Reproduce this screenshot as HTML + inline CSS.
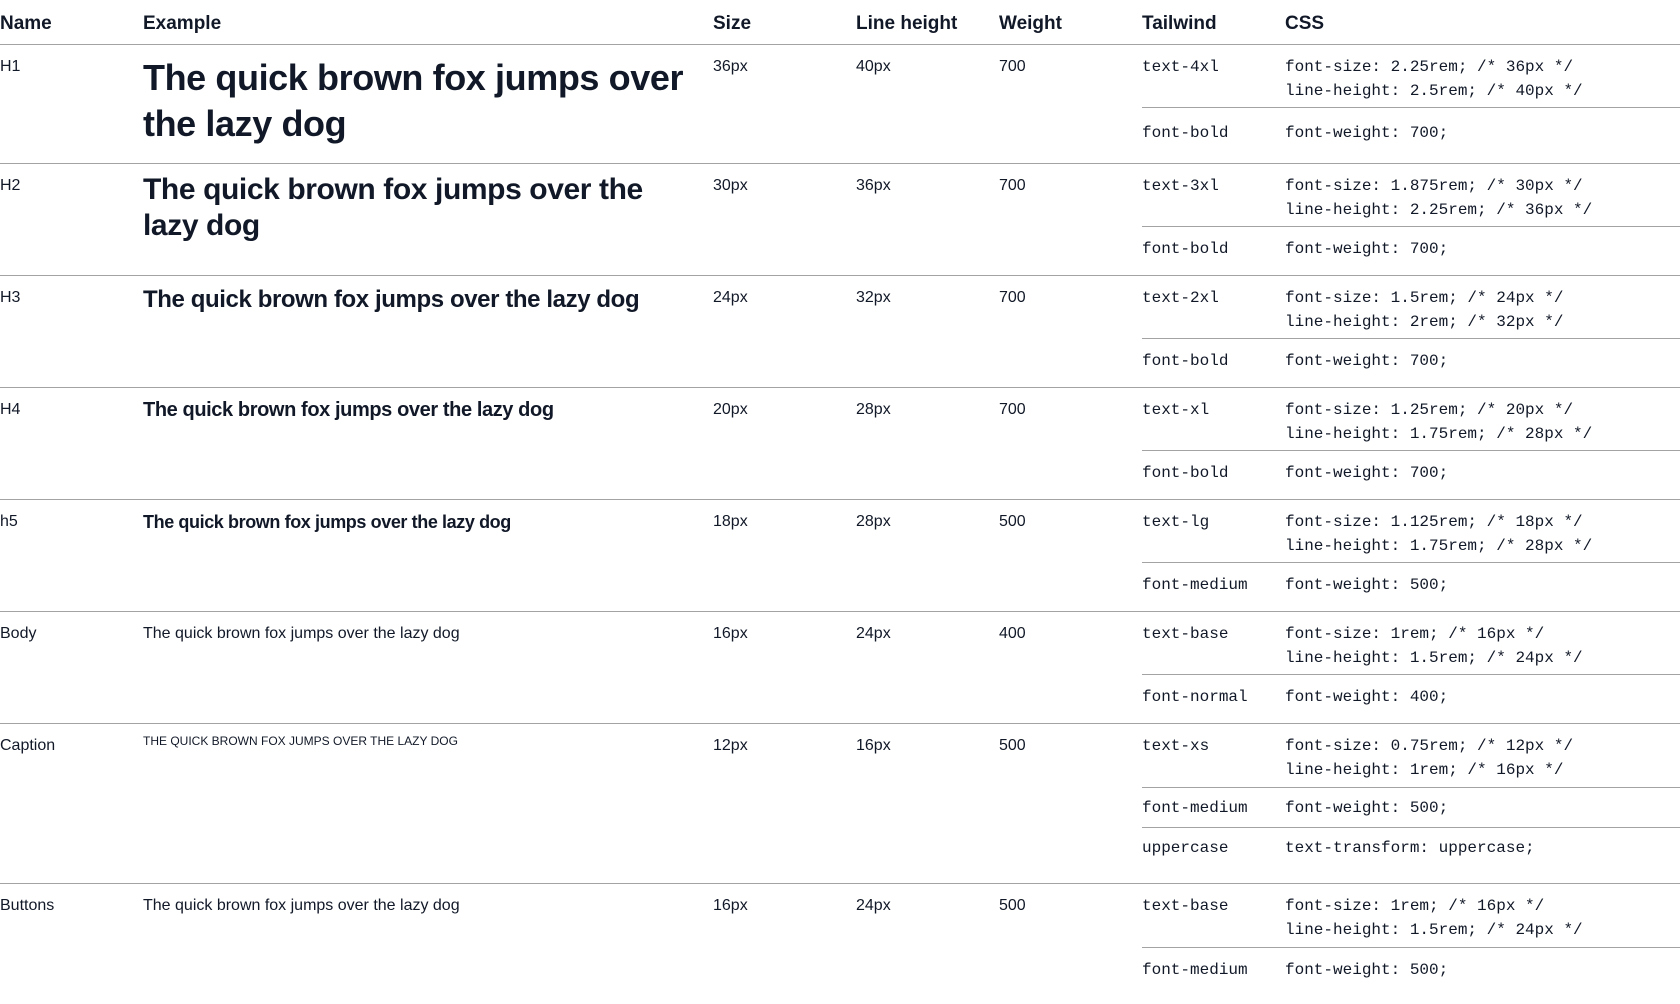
<!DOCTYPE html>
<html><head><meta charset="utf-8"><style>
*{margin:0;padding:0;box-sizing:border-box}
body{width:1680px;height:979px;overflow:hidden;background:#fff;color:#111827;font-family:"Liberation Sans",sans-serif;font-size:16px;line-height:24px}
.row{position:relative;border-bottom:1px solid #a3a3a3}
.c{position:absolute;top:0;padding-top:10px}
.n{left:0}.e{left:143px;width:560px}.s{left:713px}.l{left:856px}.w{left:999px}
.e.h{letter-spacing:-0.4px}
.tw{position:absolute;left:1142px;right:0;top:0}
.sub{position:relative;border-bottom:1px solid #a3a3a3;font-family:"Liberation Mono",monospace;font-size:16px;line-height:24px;padding-top:10px}
.sub:last-child{border-bottom:none}
.sub .a{position:absolute;left:0;top:10px}
.sub .b{margin-left:143px}
.hd{height:45px;border-bottom:1px solid #a3a3a3;position:relative}
.hd div{position:absolute;top:12px;font-weight:bold;font-size:19px;line-height:24px}
</style></head><body>
<div class="hd"><div style="left:0">Name</div><div style="left:143px">Example</div><div style="left:713px">Size</div><div style="left:856px">Line height</div><div style="left:999px">Weight</div><div style="left:1142px">Tailwind</div><div style="left:1285px">CSS</div></div>

<div class="row" style="height:119px">
<div class="c n">H1</div><div class="c e h" style="font-size:36px;line-height:46px;font-weight:bold;padding-top:10px">The quick brown fox jumps over the lazy dog</div>
<div class="c s">36px</div><div class="c l">40px</div><div class="c w">700</div>
<div class="tw"><div class="sub" style="height:63px"><span class="a">text-4xl</span><div class="b">font-size: 2.25rem; /* 36px */<br>line-height: 2.5rem; /* 40px */</div></div><div class="sub" style="height:56px;padding-top:13px"><span class="a" style="top:13px">font-bold</span><div class="b">font-weight: 700;</div></div></div>
</div>

<div class="row" style="height:112px">
<div class="c n">H2</div><div class="c e h" style="font-size:30px;line-height:36px;font-weight:bold;padding-top:8px;width:540px">The quick brown fox jumps over the lazy dog</div>
<div class="c s">30px</div><div class="c l">36px</div><div class="c w">700</div>
<div class="tw"><div class="sub" style="height:63px"><span class="a">text-3xl</span><div class="b">font-size: 1.875rem; /* 30px */<br>line-height: 2.25rem; /* 36px */</div></div><div class="sub" style="height:49px"><span class="a">font-bold</span><div class="b">font-weight: 700;</div></div></div>
</div>

<div class="row" style="height:112px">
<div class="c n">H3</div><div class="c e h" style="font-size:24px;line-height:32px;font-weight:bold;padding-top:8px">The quick brown fox jumps over the lazy dog</div>
<div class="c s">24px</div><div class="c l">32px</div><div class="c w">700</div>
<div class="tw"><div class="sub" style="height:63px"><span class="a">text-2xl</span><div class="b">font-size: 1.5rem; /* 24px */<br>line-height: 2rem; /* 32px */</div></div><div class="sub" style="height:49px"><span class="a">font-bold</span><div class="b">font-weight: 700;</div></div></div>
</div>

<div class="row" style="height:112px">
<div class="c n">H4</div><div class="c e h" style="font-size:20px;line-height:28px;font-weight:bold;padding-top:8px">The quick brown fox jumps over the lazy dog</div>
<div class="c s">20px</div><div class="c l">28px</div><div class="c w">700</div>
<div class="tw"><div class="sub" style="height:63px"><span class="a">text-xl</span><div class="b">font-size: 1.25rem; /* 20px */<br>line-height: 1.75rem; /* 28px */</div></div><div class="sub" style="height:49px"><span class="a">font-bold</span><div class="b">font-weight: 700;</div></div></div>
</div>

<div class="row" style="height:112px">
<div class="c n">h5</div><div class="c e h" style="font-size:18px;line-height:28px;font-weight:bold;padding-top:8px">The quick brown fox jumps over the lazy dog</div>
<div class="c s">18px</div><div class="c l">28px</div><div class="c w">500</div>
<div class="tw"><div class="sub" style="height:63px"><span class="a">text-lg</span><div class="b">font-size: 1.125rem; /* 18px */<br>line-height: 1.75rem; /* 28px */</div></div><div class="sub" style="height:49px"><span class="a">font-medium</span><div class="b">font-weight: 500;</div></div></div>
</div>

<div class="row" style="height:112px">
<div class="c n">Body</div><div class="c e">The quick brown fox jumps over the lazy dog</div>
<div class="c s">16px</div><div class="c l">24px</div><div class="c w">400</div>
<div class="tw"><div class="sub" style="height:63px"><span class="a">text-base</span><div class="b">font-size: 1rem; /* 16px */<br>line-height: 1.5rem; /* 24px */</div></div><div class="sub" style="height:49px"><span class="a">font-normal</span><div class="b">font-weight: 400;</div></div></div>
</div>

<div class="row" style="height:160px">
<div class="c n">Caption</div><div class="c e" style="font-size:12px;line-height:16px;text-transform:uppercase;padding-top:9px">The quick brown fox jumps over the lazy dog</div>
<div class="c s">12px</div><div class="c l">16px</div><div class="c w">500</div>
<div class="tw"><div class="sub" style="height:64px"><span class="a">text-xs</span><div class="b">font-size: 0.75rem; /* 12px */<br>line-height: 1rem; /* 16px */</div></div><div class="sub" style="height:40px;padding-top:8px"><span class="a" style="top:8px">font-medium</span><div class="b">font-weight: 500;</div></div><div class="sub" style="height:56px;padding-top:8px"><span class="a" style="top:8px">uppercase</span><div class="b">text-transform: uppercase;</div></div></div>
</div>

<div class="row" style="height:120px;border-bottom:none">
<div class="c n">Buttons</div><div class="c e">The quick brown fox jumps over the lazy dog</div>
<div class="c s">16px</div><div class="c l">24px</div><div class="c w">500</div>
<div class="tw"><div class="sub" style="height:64px"><span class="a">text-base</span><div class="b">font-size: 1rem; /* 16px */<br>line-height: 1.5rem; /* 24px */</div></div><div class="sub" style="height:49px"><span class="a">font-medium</span><div class="b">font-weight: 500;</div></div></div>
</div>
</body></html>
